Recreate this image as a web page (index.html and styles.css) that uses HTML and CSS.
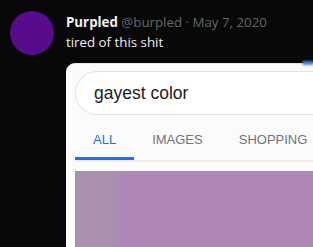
FILE: index.html
```html
<!DOCTYPE html>
<html lang="en">
<head>
    <meta charset="UTF-8">
    <title>Tweet</title>
    <link rel="stylesheet" href="styles.css">
</head>
<body>
    <div class="tweet">
        <div class="avatar"></div>
        <div class="tweet-body">
            <div class="tweet-head">
                <span class="name">Purpled</span>
                <span class="meta">@burpled · May 7, 2020</span>
            </div>
            <div class="tweet-text">tired of this shit</div>
            <div class="card">
                <div class="search">gayest color</div>
                <div class="tabs">
                    <div class="tab active">ALL</div>
                    <div class="tab">IMAGES</div>
                    <div class="tab">SHOPPING</div>
                </div>
                <div class="result">
                    <div class="swatch-left"></div>
                    <div class="swatch-right"></div>
                </div>
            </div>
        </div>
    </div>
</body>
</html>
```

FILE: styles.css
```css
body {
    margin: 0;
    background-color: #080808;
    font-family: "Open Sans", "Noto Sans", sans-serif;
    overflow: hidden;
    width: 313px;
    height: 247px;
}
.tweet {
    display: flex;
    padding: 11px 0 0 10px;
    gap: 12px;
}
.avatar {
    width: 44px;
    height: 44px;
    border-radius: 50%;
    background-color: #560c8c;
    flex-shrink: 0;
}
.tweet-body {
    display: flex;
    flex-direction: column;
}
.tweet-head {
    font-size: 13.3px;
    line-height: 22px;
    white-space: nowrap;
}
.name {
    color: #f2f2f2;
    font-weight: 700;
}
.meta {
    color: #62676c;
}
.tweet-text {
    color: #eeeeee;
    font-size: 13.3px;
    line-height: 18px;
}
.card {
    position: relative;
    margin-top: 12px;
    width: 270px;
    height: 200px;
    background-color: #fbfbfb;
    border-top: 1px solid #e4e4e4;
    border-radius: 9px 0 0 0;
    padding: 7px 0 0 9px;
}
/* blurry blue blob on the top edge of the phone screenshot */
.card::after {
    content: "";
    position: absolute;
    top: -3px;
    left: 236px;
    width: 12px;
    height: 4px;
    border-radius: 3px;
    background-color: #3f86e8;
    filter: blur(1px);
}
.search {
    height: 42px;
    border: 1px solid #e2e2e2;
    border-right: none;
    border-radius: 22px 0 0 22px;
    padding-left: 18px;
    font-family: "Liberation Sans", Arial, sans-serif;
    font-size: 17.5px;
    line-height: 42px;
    color: #212121;
    background-color: #fff;
}
.tabs {
    display: flex;
    height: 45px;
    border-bottom: 2px solid #ececec;
}
.tab {
    font-family: "Liberation Sans", Arial, sans-serif;
    font-size: 13px;
    color: #70757a;
    padding: 17px 18px 0 18px;
}
.tab.active {
    color: #1a73e8;
    border-bottom: 3px solid #1a73e8;
}
.result {
    display: flex;
    margin-top: 9px;
    height: 80px;
}
.swatch-left {
    width: 44px;
    background-color: #a890ae;
}
.swatch-right {
    flex-grow: 1;
    background-color: #ae86b8;
}
```
